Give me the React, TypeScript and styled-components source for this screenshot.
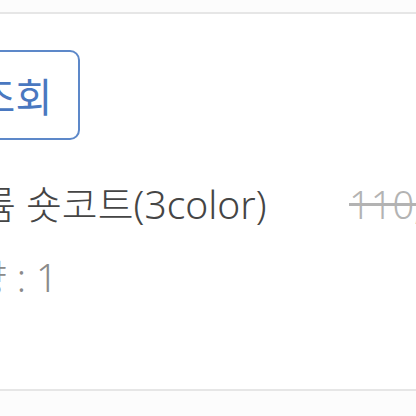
import styled, { createGlobalStyle } from 'styled-components';

const GlobalStyle = createGlobalStyle`
  body {
    margin: 0;
    background: #fff;
    font-family: "Noto Sans", "Noto Sans CJK KR", sans-serif;
    overflow: hidden;
  }
`;

const Page = styled.div`
  width: 416px;
  height: 416px;
  overflow: hidden;
  display: flex;
  flex-direction: column;
  background: #fcfcfc;
`;

const TopSpace = styled.div`
  height: 12px;
  flex: none;
`;

// the card is wider than the viewport; the screenshot is a crop of it
const Card = styled.section`
  flex: none;
  height: 379px;
  width: 663px;
  margin-left: -123px;
  background: #fff;
  border-top: 2px solid #e6e6e6;
  border-bottom: 2px solid #e6e6e6;
  box-sizing: border-box;
  display: flex;
  flex-direction: column;
  padding-top: 36px;
`;

const Button = styled.button`
  align-self: flex-start;
  height: 90px;
  border: 2px solid #5d88c9;
  border-radius: 10px;
  background: #fff;
  color: #4a78c0;
  font-family: "Noto Sans CJK KR", sans-serif;
  font-size: 40px;
  padding: 0 26px;
  white-space: nowrap;
  box-sizing: border-box;
`;

const ItemRow = styled.div`
  display: flex;
  justify-content: space-between;
  align-items: flex-start;
  margin-top: 38px;
  padding-left: 67px;
`;

const Info = styled.div`
  display: flex;
  flex-direction: column;
  gap: 21px;
`;

const Title = styled.div`
  font-size: 39px;
  font-weight: 300;
  line-height: 52px;
  color: #454545;
  white-space: nowrap;
`;

const Qty = styled.div`
  font-size: 38px;
  font-weight: 300;
  line-height: 52px;
  color: #8a8a8a;
  white-space: nowrap;
  margin-left: -7px;
`;

const Price = styled.div`
  flex: none;
  width: 191px;
  font-size: 38px;
  font-weight: 300;
  line-height: 52px;
  color: #b3b3b3;
  text-decoration: line-through;
  white-space: nowrap;
`;

export default function App() {
  return (
    <Page>
      <GlobalStyle />
      <TopSpace />
      <Card>
        <Button>배송조회</Button>
        <ItemRow>
          <Info>
            <Title>볼륨 숏코트(3color)</Title>
            <Qty>수량 : 1</Qty>
          </Info>
          <Price>110,000원</Price>
        </ItemRow>
      </Card>
    </Page>
  );
}
